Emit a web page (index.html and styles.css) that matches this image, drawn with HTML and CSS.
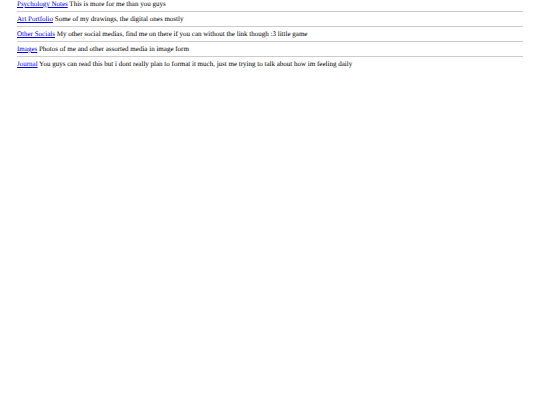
FILE: index.html
```
<!DOCTYPE html>
<html lang="en">
<head>
    <meta charset="UTF-8">
    <meta name="viewport" content="width=device-width, initial-scale=1.0">
    <title>My Site</title>
    <link rel="stylesheet" href="styles.css">
</head>
<body>
    <main class="links">
        <p class="entry"><a href="#psychology">Psychology Notes</a> This is more for me than you guys</p>
        <hr class="divider">
        <p class="entry"><a href="#art">Art Portfolio</a> Some of my drawings, the digital ones mostly</p>
        <hr class="divider">
        <p class="entry"><a href="#socials">Other Socials</a> My other social medias, find me on there if you can without the link though :3 little game</p>
        <hr class="divider">
        <p class="entry"><a href="#images">Images</a> Photos of me and other assorted media in image form</p>
        <hr class="divider">
        <p class="entry"><a href="#journal">Journal</a> You guys can read this but i dont really plan to format it much, just me trying to talk about how im feeling daily</p>
    </main>
</body>
</html>
```

FILE: styles.css
```
body {
    margin: 0;
    background-color: #ffffff;
    color: #000000;
    font-family: "Liberation Serif", "Times New Roman", serif;
    font-size: 7px;
    line-height: 8px;
    text-rendering: geometricPrecision;
}

.links {
    padding: 0 17px;
}

.entry {
    margin: 0;
}

.entry a {
    color: #0000ee;
}

.divider {
    height: 1px;
    margin: 3px 0;
    border: none;
    background-color: #cccccc;
}
```
